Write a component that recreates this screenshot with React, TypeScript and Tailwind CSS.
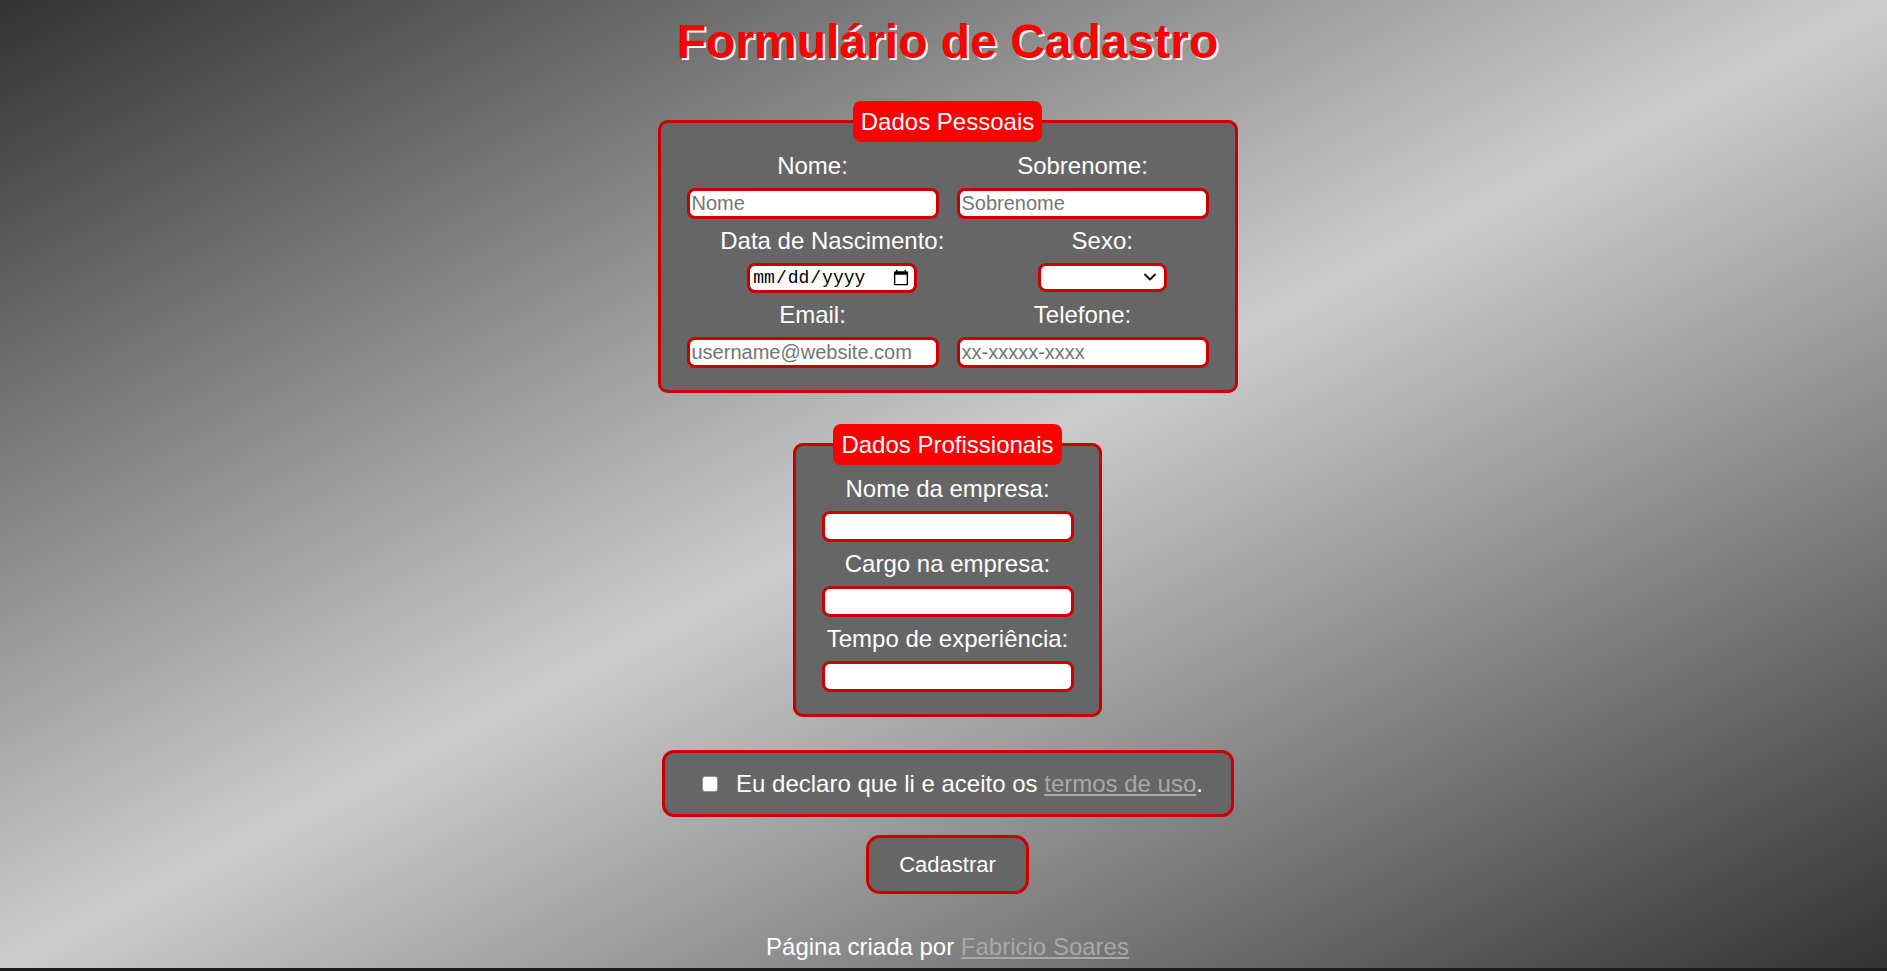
import { useState } from "react";

type Field = {
  label: string;
  type?: string;
  placeholder?: string;
};

const inputClass =
  "h-[31px] w-[252px] rounded-[8px] border-[3px] border-[#cc0000] bg-white px-[2px] text-[20px] leading-[23px] text-black outline-none placeholder:text-[#757575]";

const legendClass =
  "mx-auto rounded-[8px] bg-[#ff0000] px-2 py-[6px] text-[24px] leading-[29px] text-white";

const labelClass = "text-[24px] leading-[28px] text-white";

function Campo({ label, type = "text", placeholder }: Field) {
  return (
    <div className="flex flex-col items-center gap-2">
      <label className={labelClass}>{label}</label>
      <input type={type} placeholder={placeholder} className={inputClass} />
    </div>
  );
}

export default function App() {
  const [aceito, setAceito] = useState(false);

  return (
    <div className="font-['Liberation_Sans',Arial,sans-serif]">
      <div className="flex min-h-[968px] flex-col items-center bg-[linear-gradient(to_bottom_right,#333333,#cccccc,#333333)] pl-2">
        <h1 className="mt-[15px] text-[48px] font-bold leading-[54px] text-[#ff0000] [text-shadow:2px_2px_0_#ffffff]">
          Formulário de Cadastro
        </h1>

        <fieldset className="mt-8 w-[580px] rounded-[10px] border-[3px] border-[#cc0000] bg-[#666666] px-[17px] pb-[22px] pt-[10px]">
          <legend className={legendClass}>Dados Pessoais</legend>
          <div className="flex flex-col gap-2">
            <div className="flex justify-around">
              <Campo label="Nome:" placeholder="Nome" />
              <Campo label="Sobrenome:" placeholder="Sobrenome" />
            </div>
            <div className="-ml-1 mr-1 flex justify-around">
              <div className="flex flex-col items-center gap-2">
                <label className={labelClass}>Data de Nascimento:</label>
                <input
                  type="date"
                  className="h-[30px] w-[170px] rounded-[8px] border-[3px] border-[#cc0000] bg-white px-[2px] font-['Liberation_Mono',monospace] text-[18px] text-black outline-none"
                />
              </div>
              <div className="flex flex-col items-center gap-2">
                <label className={labelClass}>Sexo:</label>
                <div className="relative">
                  <select className="h-[29px] w-[129px] appearance-none rounded-[8px] border-[3px] border-[#cc0000] bg-white text-[18px] text-black outline-none">
                    <option value=""></option>
                    <option value="m">Masculino</option>
                    <option value="f">Feminino</option>
                    <option value="o">Outro</option>
                  </select>
                  <svg
                    viewBox="0 0 12 8"
                    className="pointer-events-none absolute right-[11px] top-[10px] h-[8px] w-[12px]"
                    fill="none"
                    stroke="#111"
                    strokeWidth="1.8"
                    strokeLinecap="round"
                    strokeLinejoin="round"
                  >
                    <path d="M1 1.5l5 5 5-5" />
                  </svg>
                </div>
              </div>
            </div>
            <div className="flex justify-around">
              <Campo label="Email:" type="email" placeholder="username@website.com" />
              <Campo label="Telefone:" type="tel" placeholder="xx-xxxxx-xxxx" />
            </div>
          </div>
        </fieldset>

        <fieldset className="mt-[31px] w-[309px] rounded-[10px] border-[3px] border-[#cc0000] bg-[#666666] pb-[22px] pt-[10px]">
          <legend className={legendClass}>Dados Profissionais</legend>
          <div className="flex flex-col gap-2">
            <Campo label="Nome da empresa:" />
            <Campo label="Cargo na empresa:" />
            <Campo label="Tempo de experiência:" />
          </div>
        </fieldset>

        <div className="mt-[33px] flex h-[67px] w-[572px] items-center justify-center rounded-[12px] border-[3px] border-[#cc0000] bg-[#666666] pl-[10px] text-[24px] text-white">
          <input
            type="checkbox"
            checked={aceito}
            onChange={(e) => setAceito(e.target.checked)}
            className="h-4 w-4 appearance-none rounded-[3px] border border-[#8f8f8f] bg-white checked:bg-[#0075ff]"
          />
          <span className="ml-[18px]">
            Eu declaro que li e aceito os{" "}
            <a href="#" className="text-[#a9a9a9] underline">
              termos de uso
            </a>
            .
          </span>
        </div>

        <button className="mt-[18px] h-[59px] w-[163px] rounded-[14px] border-[3px] border-[#cc0000] bg-[#666666] text-[22px] text-white">
          Cadastrar
        </button>

        <p className="mt-[39px] pb-[6px] text-[24px] leading-[28px] text-white">
          Página criada por{" "}
          <a href="#" className="text-[#a9a9a9] underline">
            Fabricio Soares
          </a>
        </p>
      </div>
      <div className="h-[3px] bg-[#1c1c1c]" />
    </div>
  );
}
